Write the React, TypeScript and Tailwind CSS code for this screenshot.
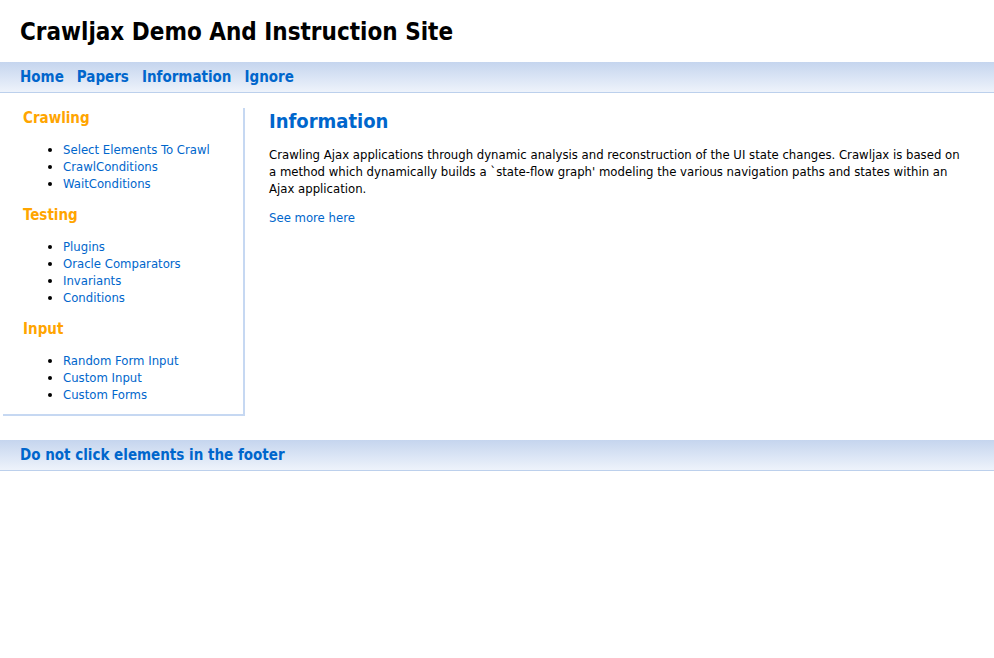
export default function App() {
  const sections = [
    { title: "Crawling", items: ["Select Elements To Crawl", "CrawlConditions", "WaitConditions"] },
    { title: "Testing", items: ["Plugins", "Oracle Comparators", "Invariants", "Conditions"] },
    { title: "Input", items: ["Random Form Input", "Custom Input", "Custom Forms"] },
  ];

  return (
    <div
      className="min-h-[658px] bg-white text-black"
      style={{ fontFamily: '"DejaVu Sans Condensed", "DejaVu Sans", Verdana, sans-serif' }}
    >
      <header className="h-[62px] px-5 pt-[18px]">
        <h1 className="text-[24px] font-bold leading-[28px]">Crawljax Demo And Instruction Site</h1>
      </header>

      <nav className="flex h-[31px] items-center gap-[13px] border-b border-[#bcd0ec] bg-gradient-to-b from-[#c5d5ee] to-[#eef3fb] px-5">
        {["Home", "Papers", "Information", "Ignore"].map((l) => (
          <a key={l} href="#" className="text-[15px] font-bold text-[#0066cc]">
            {l}
          </a>
        ))}
      </nav>

      <div className="flex items-start pt-[15px]">
        <aside className="ml-[3px] w-[242px] shrink-0 border-r-2 border-b-2 border-[#c6d8f2] pb-[11px] pl-5">
          {sections.map((s, i) => (
            <div key={s.title} className={i > 0 ? "mt-[13px]" : ""}>
              <h3 className="text-[15px] font-bold leading-[20px] text-[#ffa500]">{s.title}</h3>
              <ul className="mt-[13px] list-disc pl-10 text-[13px] leading-[17px]">
                {s.items.map((it) => (
                  <li key={it}>
                    <a href="#" className="text-[#0066cc]">
                      {it}
                    </a>
                  </li>
                ))}
              </ul>
            </div>
          ))}
        </aside>

        <main className="ml-[24px] mr-[28px] flex-1">
          <h2 className="text-[20px] font-bold leading-[26px] text-[#0066cc]">Information</h2>
          <p className="mt-[12px] text-[13px] leading-[17px]">
            Crawling Ajax applications through dynamic analysis and reconstruction of the UI state changes. Crawljax is
            based on a method which dynamically builds a `state-flow graph' modeling the various navigation paths and
            states within an Ajax application.
          </p>
          <a href="#" className="mt-[12px] block text-[13px] leading-[17px] text-[#0066cc]">
            See more here
          </a>
        </main>
      </div>

      <footer className="mt-[24px] flex h-[31px] items-center border-b border-[#bcd0ec] bg-gradient-to-b from-[#c5d5ee] to-[#eef3fb] px-5">
        <span className="text-[15px] font-bold text-[#0066cc]">Do not click elements in the footer</span>
      </footer>
    </div>
  );
}
